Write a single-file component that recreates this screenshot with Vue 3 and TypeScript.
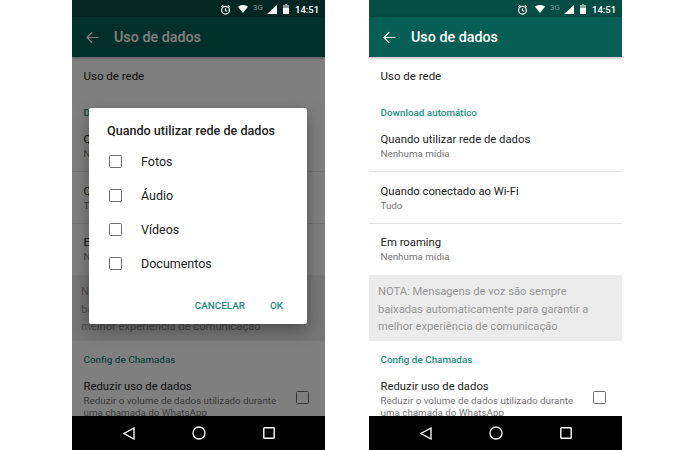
<script setup lang="ts">
interface Screen { id: number; dimmed: boolean }
const screens: Screen[] = [
  { id: 1, dimmed: true },
  { id: 2, dimmed: false },
]
const options: string[] = ['Fotos', 'Áudio', 'Vídeos', 'Documentos']
const rows = [
  { title: 'Quando utilizar rede de dados', sub: 'Nenhuma mídia' },
  { title: 'Quando conectado ao Wi-Fi', sub: 'Tudo' },
  { title: 'Em roaming', sub: 'Nenhuma mídia' },
]
</script>

<template>
  <div class="page">
    <div v-for="s in screens" :key="s.id" class="phone">
      <div class="status">
        <svg class="ic" width="11" height="11" viewBox="0 0 24 24"><path fill="none" stroke="#fff" stroke-width="2.6" d="M12 5a8 8 0 1 0 0 17 8 8 0 0 0 0-17zM12 9v5l3.5 2M2.5 6.5 7 2.5M21.5 6.5 17 2.5"/></svg>
        <svg class="ic wifi" width="10" height="8" viewBox="0 0 20 16"><path fill="#fff" d="M0 3.5C5.500-1.200 14.500-1.200 20 3.500L10 16z"/></svg>
        <span class="net">3G</span>
        <svg class="ic signal" width="10" height="9" viewBox="0 0 10 9"><path fill="#fff" d="M10 0v9H0z"/></svg>
        <svg class="ic batt" width="6" height="10" viewBox="0 0 6 10"><path fill="#fff" opacity=".55" d="M2 0h2v1h2v4H0V1h2z"/><path fill="#fff" d="M0 4h6v6H0z"/></svg>
        <span class="time">14:51</span>
      </div>
      <header class="appbar">
        <svg width="13" height="13" viewBox="0 0 24 24"><path fill="none" stroke="#fff" stroke-width="2.200" d="M23 12H2M11.500 2 1.800 12l9.700 10"/></svg>
        <span class="apptitle">Uso de dados</span>
      </header>
      <main class="content">
        <div class="single">Uso de rede</div>
        <div class="section first">Download automático</div>
        <div v-for="r in rows" :key="r.title" class="row">
          <div class="title">{{ r.title }}</div>
          <div class="sub">{{ r.sub }}</div>
        </div>
        <div class="note">NOTA: Mensagens de voz são sempre baixadas automaticamente para garantir a melhor experiência de comunicação</div>
        <div class="section second">Config de Chamadas</div>
        <div class="check-row">
          <div class="check-text">
            <div class="title">Reduzir uso de dados</div>
            <div class="sub tight">Reduzir o volume de dados utilizado durante uma chamada do WhatsApp</div>
          </div>
          <span class="box"></span>
        </div>
      </main>
      <nav class="nav">
        <svg width="12" height="13" viewBox="0 0 12 13"><path fill="none" stroke="#fff" stroke-width="1.300" d="M11 1v11L1 6.500z"/></svg>
        <svg width="14" height="14" viewBox="0 0 14 14"><circle cx="7" cy="7" r="6" fill="none" stroke="#fff" stroke-width="1.300"/></svg>
        <svg width="12" height="12" viewBox="0 0 12 12"><rect x=".8" y=".8" width="10.400" height="10.400" rx=".6" fill="none" stroke="#fff" stroke-width="1.400"/></svg>
      </nav>
      <div v-if="s.dimmed" class="scrim">
        <div class="dialog">
          <div class="dlg-title">Quando utilizar rede de dados</div>
          <label v-for="o in options" :key="o" class="opt">
            <span class="box"></span>
            <span>{{ o }}</span>
          </label>
          <div class="actions">
            <span>CANCELAR</span>
            <span>OK</span>
          </div>
        </div>
      </div>
    </div>
  </div>
</template>

<style>
html, body { margin: 0; background: #fff; }
</style>

<style scoped>
.page {
  display: flex;
  gap: 44px;
  padding-left: 72px;
  width: 695px;
  height: 450px;
  box-sizing: border-box;
  font-family: Roboto, "Liberation Sans", sans-serif;
  overflow: hidden;
  background: #fff;
}
.phone {
  position: relative;
  width: 253px;
  height: 450px;
  display: flex;
  flex-direction: column;
  background: #fff;
  overflow: hidden;
}
.status {
  height: 17px;
  flex: none;
  background: #054c44;
  display: flex;
  align-items: center;
  padding-left: 148px;
  padding-top: 1px;
  box-sizing: border-box;
}
.ic { position: relative; z-index: 3; flex: none; }
.wifi { margin-left: 7px; }
.net {
  position: relative;
  z-index: 3;
  font-size: 8px;
  color: rgba(255, 255, 255, .45);
  margin: -4px 0 0 5px;
  width: 14px;
}
.batt { margin-left: 6px; }
.time {
  position: relative;
  z-index: 3;
  margin-left: 6px;
  color: #fff;
  font-size: 9.500px;
  font-weight: 500;
}
.appbar {
  height: 40px;
  flex: none;
  background: #075e54;
  display: flex;
  align-items: center;
  padding-left: 14px;
  gap: 15px;
  box-shadow: 0 1px 3px rgba(0, 0, 0, .3);
  position: relative;
  z-index: 1;
}
.apptitle { color: #fff; font-size: 14.300px; font-weight: 500; }
.content {
  flex: 1;
  min-height: 0;
  overflow: hidden;
  color: #212121;
}
.single { font-size: 11.500px; padding: 12px 11.500px 0; line-height: 14px; }
.section {
  font-size: 9.900px;
  font-weight: 500;
  color: #1f8f7c;
  padding: 0 11.500px;
  line-height: 12px;
}
.first { margin-top: 24px; }
.second { margin-top: 13px; }
.row {
  box-sizing: border-box;
  height: 52px;
  padding: 13px 11.500px 0;
  border-bottom: 1px solid #e4e4e4;
}
.row:nth-of-type(3) { height: 53px; padding-top: 14px; }
.row:nth-of-type(5) { height: 51px; padding-top: 12px; border-bottom: 0; }
.title { font-size: 11.300px; line-height: 14px; }
.sub { font-size: 9.800px; line-height: 14px; color: #757575; }
.tight { line-height: 12px; margin-top: .5px; }
.note {
  background: #ececec;
  height: 66px;
  box-sizing: border-box;
  padding: 8px 20px 0 9px;
  font-size: 11.200px;
  line-height: 17.500px;
  color: #969696;
}
.check-row {
  display: flex;
  justify-content: space-between;
  padding: 14px 16px 0 11.500px;
}
.check-text { width: 205px; }
.box {
  flex: none;
  width: 13px;
  height: 13px;
  box-sizing: border-box;
  border: 1.500px solid #6e6e6e;
  border-radius: 1.500px;
}
.check-row .box { margin-top: 11px; }
.nav {
  height: 34px;
  flex: none;
  background: #000;
  position: relative;
  z-index: 3;
  display: grid;
  grid-template-columns: repeat(3, 70px);
  justify-content: center;
  justify-items: center;
  align-items: center;
}
.scrim {
  position: absolute;
  inset: 0;
  background: rgba(0, 0, 0, .5);
  z-index: 2;
}
.dialog {
  position: absolute;
  left: 17px;
  top: 108px;
  width: 218px;
  height: 216px;
  background: #fff;
  border-radius: 2px;
  box-shadow: 0 6px 16px rgba(0, 0, 0, .35);
  box-sizing: border-box;
  padding: 15px 24px 0 18px;
  color: #212121;
}
.dlg-title {
  font-size: 12.600px;
  font-weight: 500;
  line-height: 16px;
  margin-bottom: 5px;
  white-space: nowrap;
}
.opt {
  display: flex;
  align-items: center;
  gap: 19px;
  height: 34px;
  padding-left: 2px;
  font-size: 12.500px;
}
.actions {
  display: flex;
  justify-content: flex-end;
  gap: 25px;
  margin-top: 19px;
  font-size: 9.900px;
  font-weight: 500;
  color: #1f8f7c;
  line-height: 14px;
}
</style>
